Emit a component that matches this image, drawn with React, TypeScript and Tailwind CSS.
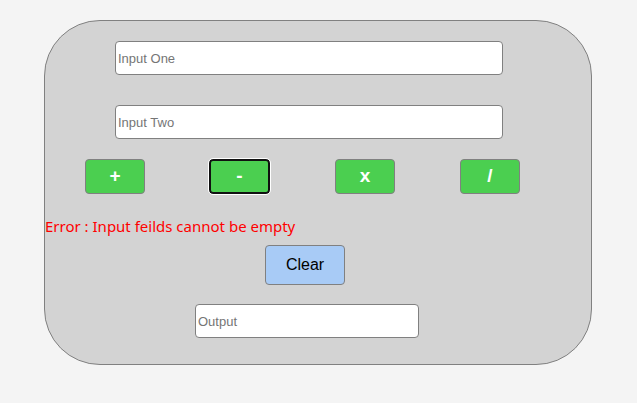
import React from "react";

const ops = ["+", "-", "x", "/"];

export default function App() {
  return (
    <div className="min-h-[403px] w-full bg-[#f4f4f4] pt-5 font-['Liberation_Sans',Arial,sans-serif]">
      <div className="ml-[44px] h-[345px] w-[548px] rounded-[56px] border border-[#808080] bg-[#d3d3d3] pt-5">
        <div className="flex flex-col">
          <input
            placeholder="Input One"
            className="ml-[70px] h-[34px] w-[388px] rounded border border-[#808080] bg-white px-[2px] text-[13px] text-black outline-none placeholder:text-[#757575]"
          />
          <input
            placeholder="Input Two"
            className="ml-[70px] mt-[30px] h-[34px] w-[388px] rounded border border-[#808080] bg-white px-[2px] text-[13px] text-black outline-none placeholder:text-[#757575]"
          />
        </div>

        <div className="ml-[40px] mt-[20px] flex gap-[65px]">
          {ops.map((op) => (
            <button
              key={op}
              className={
                op === "-"
                  ? "flex h-[35px] w-[61px] items-center justify-center rounded-[4px] border-2 border-[#111] bg-[#4bcf50] text-[19px] font-bold text-white outline outline-1 outline-white -ml-[1px]"
                  : "flex h-[35px] w-[60px] items-center justify-center rounded-[4px] border border-[#808080] bg-[#4bcf50] text-[19px] font-bold text-white"
              }
            >
              {op}
            </button>
          ))}
        </div>

        <p className="mt-[20px] font-['Noto_Sans','Open_Sans',sans-serif] text-[15px] leading-[24px] text-[#ff0000]">
          Error : Input feilds cannot be empty
        </p>

        <button className="ml-[220px] mt-[7px] flex h-[40px] w-[80px] items-center justify-center rounded-[4px] border border-[#808080] bg-[#a8cbf6] text-[16px] text-black">
          Clear
        </button>

        <input
          placeholder="Output"
          className="ml-[150px] mt-[19px] h-[34px] w-[224px] rounded border border-[#808080] bg-white px-[2px] text-[13px] text-black outline-none placeholder:text-[#757575]"
        />
      </div>
    </div>
  );
}
